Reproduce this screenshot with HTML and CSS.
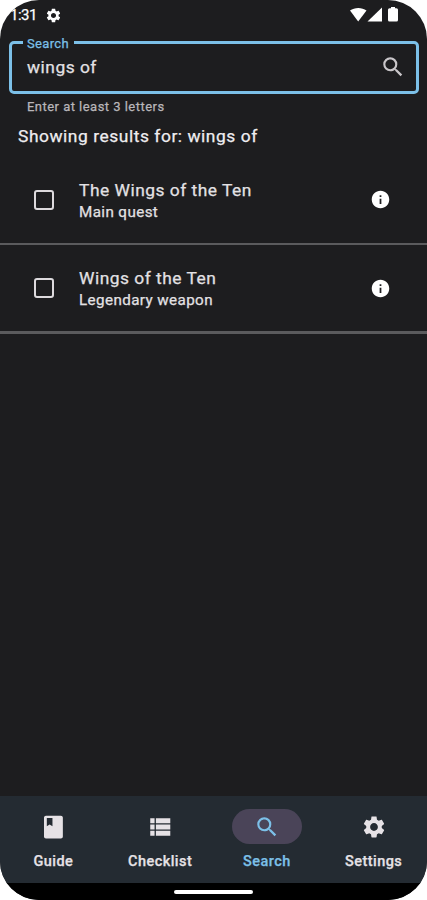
FILE: index.html
```
<!DOCTYPE html>
<html lang="en">
<head>
    <meta charset="UTF-8">
    <meta name="viewport" content="width=device-width, initial-scale=1.0">
    <title>Search</title>
    <link rel="stylesheet" href="styles.css">
</head>
<body>
    <svg class="sprite">
        <symbol id="icon-search" viewBox="0 0 24 24">
            <path d="M15.5 14h-.79l-.28-.27A6.471 6.471 0 0 0 16 9.5 6.5 6.5 0 1 0 9.5 16c1.61 0 3.09-.59 4.23-1.57l.27.28v.79l5 4.99L20.49 19l-4.99-5zm-6 0C7.01 14 5 11.99 5 9.5S7.01 5 9.5 5 14 7.01 14 9.5 11.99 14 9.5 14z"/>
        </symbol>
        <symbol id="icon-settings" viewBox="0 0 24 24">
            <path d="M19.14 12.94c.04-.3.06-.61.06-.94 0-.32-.02-.64-.07-.94l2.03-1.58c.18-.14.23-.41.12-.61l-1.92-3.32c-.12-.22-.37-.29-.59-.22l-2.39.96c-.5-.38-1.03-.7-1.62-.94l-.36-2.54c-.04-.24-.24-.41-.48-.41h-3.84c-.24 0-.43.17-.47.41l-.36 2.54c-.59.24-1.13.57-1.62.94l-2.39-.96c-.22-.08-.47 0-.59.22L2.74 8.87c-.12.21-.08.47.12.61l2.03 1.58c-.05.3-.09.63-.09.94s.02.64.07.94l-2.03 1.58c-.18.14-.23.41-.12.61l1.92 3.32c.12.22.37.29.59.22l2.39-.96c.5.38 1.03.7 1.62.94l.36 2.54c.05.24.24.41.48.41h3.84c.24 0 .44-.17.47-.41l.36-2.54c.59-.24 1.13-.56 1.62-.94l2.39.96c.22.08.47 0 .59-.22l1.92-3.32c.12-.22.07-.47-.12-.61l-2.01-1.58zM12 15.6c-1.98 0-3.6-1.62-3.6-3.6s1.62-3.6 3.6-3.6 3.6 1.62 3.6 3.6-1.62 3.6-3.6 3.6z"/>
        </symbol>
        <symbol id="icon-info" viewBox="0 0 24 24">
            <path d="M12 2C6.48 2 2 6.48 2 12s4.48 10 10 10 10-4.48 10-10S17.52 2 12 2zm1 15h-2v-6h2v6zm0-8h-2V7h2v2z"/>
        </symbol>
    </svg>

    <div class="phone">
        <header class="status-bar">
            <span class="clock">1:31</span>
            <svg class="status-gear"><use href="#icon-settings"/></svg>
            <svg class="status-icons" viewBox="0 0 50 18">
                <path d="M0 4.500C4.500 1 12 1 16.500 4.500L8.200 15.500z"/>
                <path d="M32 1.500V15.500H17.500z"/>
                <path d="M41 1h4v1.300h1.500a1.500 1.500 0 0 1 1.500 1.500v10.200a1.500 1.500 0 0 1-1.500 1.500h-7a1.500 1.500 0 0 1-1.500-1.500V3.800a1.500 1.500 0 0 1 1.500-1.500H41z"/>
            </svg>
        </header>

        <main class="content">
            <fieldset class="search-field">
                <legend>Search</legend>
                <div class="search-row">
                    <span>wings of</span>
                    <svg class="search-icon"><use href="#icon-search"/></svg>
                </div>
            </fieldset>
            <p class="hint">Enter at least 3 letters</p>
            <p class="results-title">Showing results for: wings of</p>

            <div class="results">
                <div class="result">
                    <span class="checkbox"></span>
                    <div class="result-text">
                        <div class="name">The Wings of the Ten</div>
                        <div class="type">Main quest</div>
                    </div>
                    <svg class="info"><use href="#icon-info"/></svg>
                </div>
                <div class="result last">
                    <span class="checkbox"></span>
                    <div class="result-text">
                        <div class="name">Wings of the Ten</div>
                        <div class="type">Legendary weapon</div>
                    </div>
                    <svg class="info"><use href="#icon-info"/></svg>
                </div>
            </div>
        </main>

        <nav class="bottom-nav">
            <div class="nav-item">
                <span class="pill">
                    <svg viewBox="0 0 24 24"><path d="M19.300 1.500H5.500c-1 0-1.800.8-1.800 1.800v17.400c0 1 .8 1.800 1.800 1.800h13.800c1 0 1.800-.8 1.800-1.800V3.300c0-1-.8-1.800-1.800-1.800zM6.300 3.800h5.200v7.600l-2.600-1.600-2.600 1.600z"/></svg>
                </span>
                <span class="nav-label">Guide</span>
            </div>
            <div class="nav-item">
                <span class="pill">
                    <svg viewBox="0 0 24 24"><path d="M3 4h4v4.500H3zM8.200 4H21.500v4.500H8.200zM3 9.700h4v4.600H3zM8.200 9.700H21.500v4.600H8.200zM3 15.500h4V20H3zM8.200 15.500H21.500V20H8.200z"/></svg>
                </span>
                <span class="nav-label">Checklist</span>
            </div>
            <div class="nav-item active">
                <span class="pill"><svg><use href="#icon-search"/></svg></span>
                <span class="nav-label">Search</span>
            </div>
            <div class="nav-item">
                <span class="pill"><svg><use href="#icon-settings"/></svg></span>
                <span class="nav-label">Settings</span>
            </div>
        </nav>
        <div class="gesture-bar"><span></span></div>
    </div>
</body>
</html>
```

FILE: styles.css
```
* {
    box-sizing: border-box;
}
body {
    margin: 0;
    background: #fff;
    font-family: Roboto, sans-serif;
    color: #e3e1e4;
    -webkit-text-stroke: 0.25px currentColor;
}
.sprite {
    display: none;
}
svg {
    display: block;
    fill: currentColor;
}
.phone {
    height: 900px;
    display: flex;
    flex-direction: column;
    overflow: hidden;
    background: #1d1d1f;
    border-radius: 39px;
}
.status-bar {
    display: flex;
    align-items: center;
    height: 30px;
    padding: 0 27px 0 10px;
    color: #fff;
}
.clock {
    width: 27px;
    font-size: 15px;
    letter-spacing: -0.5px;
}
.status-gear {
    width: 17px;
    height: 17px;
    margin-left: 8px;
}
.status-icons {
    width: 50px;
    height: 18px;
    margin-left: auto;
}
.content {
    flex: 1;
}
.search-field {
    height: 59px;
    margin: 5px 8px 0 9px;
    padding: 0 10px 0 11px;
    border: 3px solid #7cc0e8;
    border-radius: 5px;
}
legend {
    height: 15px;
    padding: 0 5px 0 4px;
    font-size: 13px;
    line-height: 17px;
    letter-spacing: 0.35px;
    color: #7cc0e8;
}
.search-row {
    display: flex;
    align-items: center;
    justify-content: space-between;
    height: 34px;
    padding-left: 4px;
    font-size: 17.4px;
    letter-spacing: 0.5px;
}
.search-icon {
    width: 26px;
    height: 26px;
    color: #c9c6c9;
}
.hint {
    margin: 5px 0 0 27px;
    font-size: 13px;
    line-height: 16px;
    letter-spacing: 0.47px;
    color: #b9b6ba;
}
.results-title {
    margin: 9px 0 0 18px;
    font-size: 17.4px;
    line-height: 25px;
    letter-spacing: 0.55px;
    color: #efedf0;
}
.results {
    margin-top: 7px;
}
.result {
    display: flex;
    align-items: center;
    height: 89px;
    padding: 0 36px 0 34px;
    border-bottom: 2px solid #5b5b5d;
}
.result.last {
    border-bottom-width: 3px;
}
.checkbox {
    width: 20px;
    height: 20px;
    border: 2px solid #dddadd;
    border-radius: 3px;
}
.result-text {
    flex: 1;
    margin-left: 25px;
}
.name {
    font-size: 17.4px;
    line-height: 24px;
    letter-spacing: 0.5px;
}
.type {
    font-size: 15.2px;
    line-height: 20px;
    letter-spacing: 0.4px;
}
.info {
    width: 21px;
    height: 21px;
    color: #fff;
}
.bottom-nav {
    display: flex;
    height: 87px;
    padding-top: 13px;
    background: #242b32;
}
.nav-item {
    flex: 1;
    display: flex;
    flex-direction: column;
    align-items: center;
    color: #e6e2e6;
}
.pill {
    display: flex;
    align-items: center;
    justify-content: center;
    width: 70px;
    height: 35px;
    border-radius: 18px;
}
.pill svg {
    width: 26px;
    height: 26px;
}
.nav-label {
    margin-top: 7px;
    font-size: 14.5px;
    font-weight: 500;
    line-height: 21px;
    letter-spacing: 0.45px;
}
.active {
    color: #7cc0e8;
}
.active .pill {
    background: #4a4458;
}
.gesture-bar {
    display: flex;
    justify-content: center;
    height: 17px;
    padding-top: 7px;
    background: #000;
}
.gesture-bar span {
    width: 79px;
    height: 4px;
    border-radius: 2px;
    background: #fff;
}
```
